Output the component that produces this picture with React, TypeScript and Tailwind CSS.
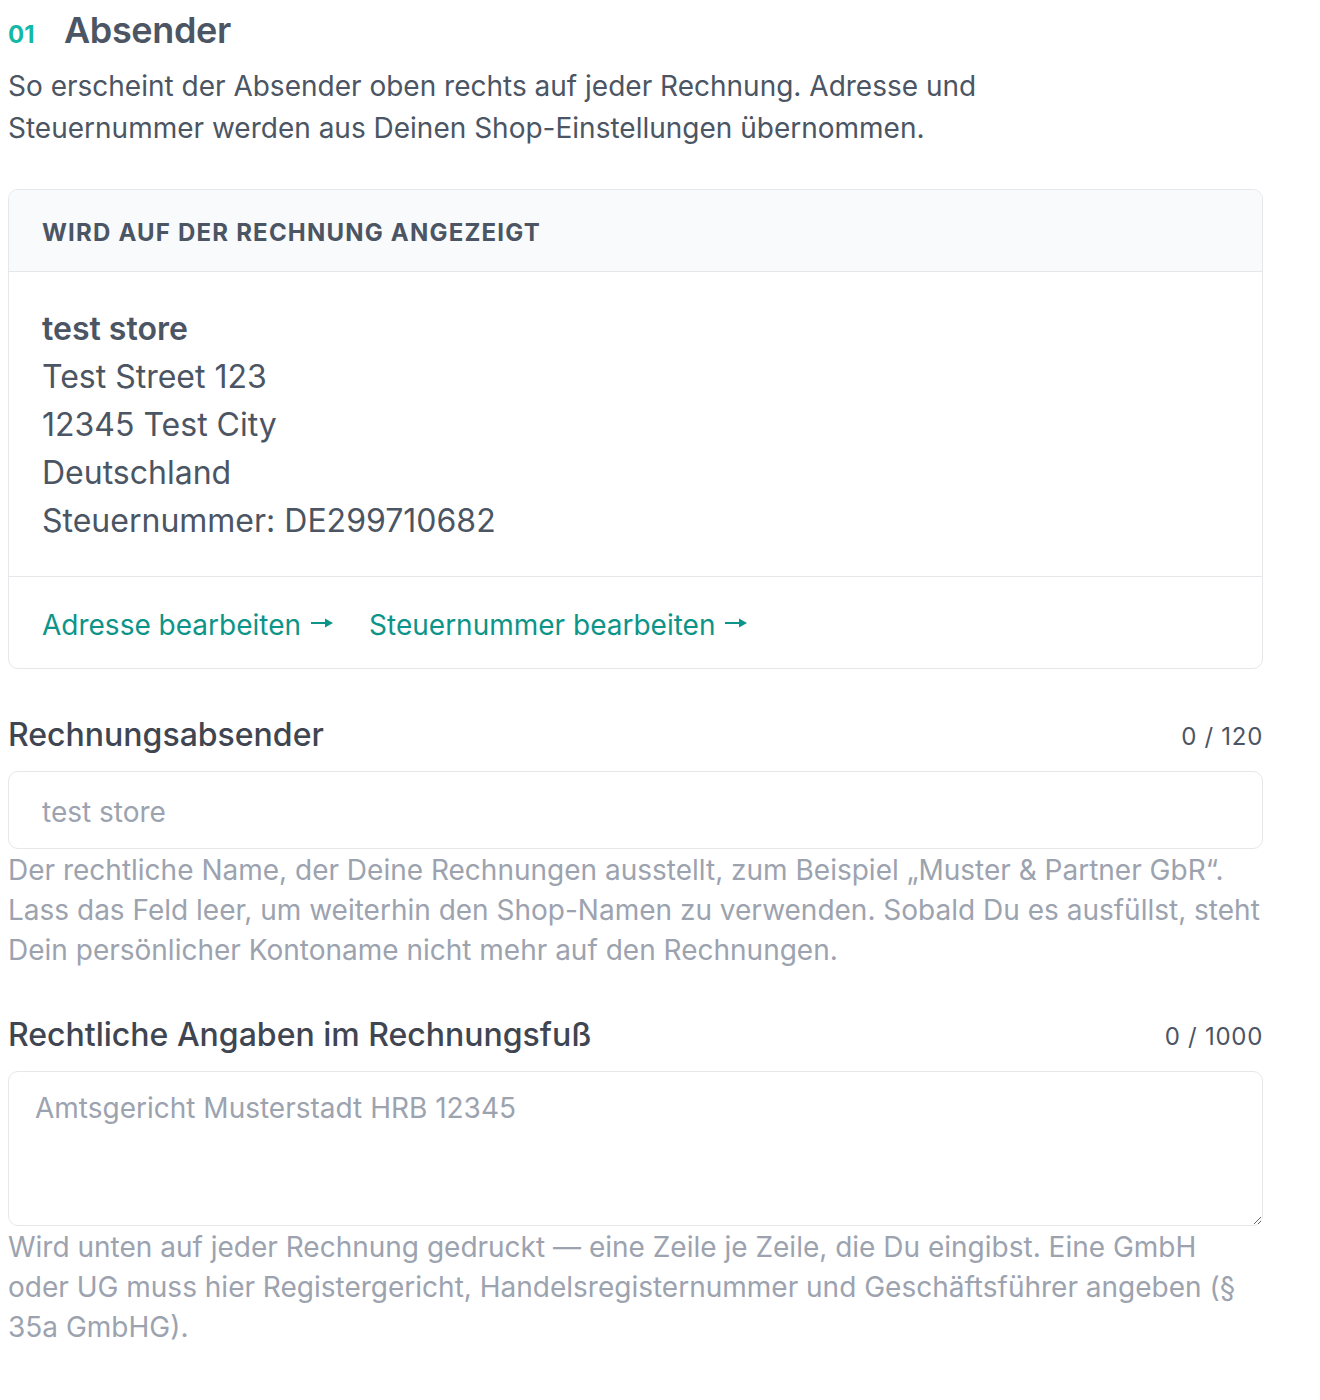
import React from "react";

const Arrow = () => (
  <svg width="22" height="12" viewBox="0 0 22 12" className="inline-block align-middle ml-[10px] mb-[4px]" fill="currentColor">
    <rect x="0" y="5" width="16" height="2" />
    <polygon points="14,1.5 22,6 14,10.5" />
  </svg>
);

export default function App() {
  return (
    <div className="min-h-[1400px] bg-white" style={{ fontFamily: "Inter, 'Noto Sans', sans-serif" }}>
      <div className="ml-2 w-[1255px] pt-2">
        <div className="flex items-baseline h-[44px] leading-[44px]">
          <span className="w-[56px] text-[24px] font-bold text-[#14b8a6]">01</span>
          <h1 className="text-[36px] font-semibold text-[#4b5563] tracking-[-0.01em]">Absender</h1>
        </div>
        <p className="mt-[13px] max-w-[1000px] text-[28px] leading-[42px] text-[#4b5563]">
          So erscheint der Absender oben rechts auf jeder Rechnung. Adresse und Steuernummer werden aus Deinen Shop-Einstellungen übernommen.
        </p>

        <div className="mt-[40px] rounded-[10px] border border-[#e5e7eb] overflow-hidden">
          <div className="h-[82px] flex items-center pt-[5px] px-[33px] bg-[#f8fafc] border-b border-[#e5e7eb]">
            <span className="text-[24px] font-bold uppercase tracking-[0.05em] text-[#4b5563]">
              Wird auf der Rechnung angezeigt
            </span>
          </div>
          <div className="px-[33px] pt-[33px] pb-[31px] text-[32px] leading-[48px] text-[#4b5563]">
            <div className="font-semibold">test store</div>
            <div>Test Street 123</div>
            <div>12345 Test City</div>
            <div>Deutschland</div>
            <div>Steuernummer: DE299710682</div>
          </div>
          <div className="h-[92px] flex items-center gap-[36px] pt-[4px] px-[33px] border-t border-[#e5e7eb] text-[28px] text-[#0d9488]">
            <a href="#" className="inline-flex items-center">Adresse bearbeiten<Arrow /></a>
            <a href="#" className="inline-flex items-center">Steuernummer bearbeiten<Arrow /></a>
          </div>
        </div>

        <div className="mt-[46px] flex items-center justify-between h-[40px]">
          <label className="text-[32px] font-medium text-[#3f4652]">Rechnungsabsender</label>
          <span className="text-[24px] text-[#4b5563] tracking-[0.03em] mt-[4px]">0 / 120</span>
        </div>
        <input
          className="mt-[16px] block w-full h-[78px] rounded-[10px] border border-[#e5e7eb] px-[33px] pt-[3px] text-[28px] text-[#4b5563] placeholder:text-[#9ca3af] outline-none"
          placeholder="test store"
        />
        <p className="mt-[1px] text-[28px] leading-[40px] text-[#9ca3af]">
          Der rechtliche Name, der Deine Rechnungen ausstellt, zum Beispiel „Muster &amp; Partner GbR“. Lass das Feld leer, um weiterhin den Shop-Namen zu verwenden. Sobald Du es ausfüllst, steht Dein persönlicher Kontoname nicht mehr auf den Rechnungen.
        </p>

        <div className="mt-[45px] flex items-center justify-between h-[40px]">
          <label className="text-[32px] font-medium text-[#3f4652]">Rechtliche Angaben im Rechnungsfuß</label>
          <span className="text-[24px] text-[#4b5563] tracking-[0.03em] mt-[4px]">0 / 1000</span>
        </div>
        <textarea
          className="mt-[16px] block w-full h-[155px] rounded-[10px] border border-[#e5e7eb] px-[26px] pt-[18px] text-[28px] leading-[36px] text-[#4b5563] placeholder:text-[#9ca3af] outline-none resize-y"
          placeholder="Amtsgericht Musterstadt HRB 12345"
        />
        <p className="mt-[1px] text-[28px] leading-[40px] text-[#9ca3af]">
          Wird unten auf jeder Rechnung gedruckt — eine Zeile je Zeile, die Du eingibst. Eine GmbH oder UG muss hier Registergericht, Handelsregisternummer und Geschäftsführer angeben (§ 35a GmbHG).
        </p>
      </div>
    </div>
  );
}
